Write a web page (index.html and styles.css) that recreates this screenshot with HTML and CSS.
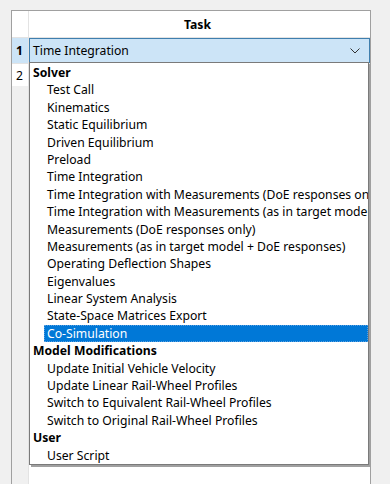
FILE: index.html
```html
<!DOCTYPE html>
<html>
<head>
<meta charset="utf-8">
<link rel="stylesheet" href="styles.css">
</head>
<body>
<div class="grid">
  <div class="row head">
    <div class="rh"></div>
    <div class="cell title">Task</div>
  </div>
  <div class="row r1">
    <div class="rh sel">1</div>
    <div class="cell edit">
      <span>Time Integration</span>
      <svg class="chev" width="10" height="6" viewBox="0 0 10 6"><path d="M0.5 0.5 L5 5 L9.5 0.5" fill="none" stroke="#333" stroke-width="1"/></svg>
    </div>
  </div>
  <div class="row r2">
    <div class="rh">2</div>
    <div class="cell"></div>
  </div>
  <div class="rest">
    <div class="rh"></div>
    <div class="cell"></div>
  </div>

  <div class="drop">
    <div class="grp">Solver</div>
    <div class="it">Test Call</div>
    <div class="it">Kinematics</div>
    <div class="it">Static Equilibrium</div>
    <div class="it">Driven Equilibrium</div>
    <div class="it">Preload</div>
    <div class="it">Time Integration</div>
    <div class="it">Time Integration with Measurements (DoE responses only)</div>
    <div class="it">Time Integration with Measurements (as in target model + DoE responses)</div>
    <div class="it">Measurements (DoE responses only)</div>
    <div class="it">Measurements (as in target model + DoE responses)</div>
    <div class="it">Operating Deflection Shapes</div>
    <div class="it">Eigenvalues</div>
    <div class="it">Linear System Analysis</div>
    <div class="it">State-Space Matrices Export</div>
    <div class="it hl">Co-Simulation</div>
    <div class="grp">Model Modifications</div>
    <div class="it">Update Initial Vehicle Velocity</div>
    <div class="it">Update Linear Rail-Wheel Profiles</div>
    <div class="it">Switch to Equivalent Rail-Wheel Profiles</div>
    <div class="it">Switch to Original Rail-Wheel Profiles</div>
    <div class="grp">User</div>
    <div class="it">User Script</div>
  </div>
</div>
</body>
</html>
```
FILE: styles.css
```css
html, body {
  margin: 0;
  padding: 0;
  background: #f0f0f0;
  height: 484px;
  overflow: hidden;
}
body {
  font-family: "Noto Sans", "Open Sans", sans-serif;
  font-size: 12.2px;
  color: #000;
}
.grid {
  position: relative;
  margin: 10px 0 0 11px;
  width: 358px;
  height: 480px;
  border: 1px solid #a0a0a0;
  border-bottom: none;
  background: #f0f0f0;
  display: flex;
  flex-direction: column;
}
.row {
  display: flex;
  background: #fff;
}
.rh {
  width: 17px;
  flex: none;
  border-right: 1px solid #e3e3e3;
  box-sizing: border-box;
  display: flex;
  align-items: center;
  padding-left: 4px;
}
.cell {
  flex: 1;
  display: flex;
  align-items: center;
  box-sizing: border-box;
}
.head {
  height: 26px;
  border-bottom: 1px solid #e3e3e3;
}
.title {
  justify-content: center;
  font-weight: bold;
  padding-right: 4px;
}
.r1 {
  height: 25px;
}
.rh.sel {
  background: #cce4f7;
  font-weight: bold;
}
.edit {
  background: #cce4f7;
  border: 1px solid #3f7fae;
  padding-left: 3px;
  justify-content: space-between;
  padding-right: 9px;
}
.r2 {
  height: 22px;
  border-top: 1px solid #e3e3e3;
}
.rest {
  flex: 1;
  display: flex;
  background: #fff;
}
.rest .rh {
  background: #f0f0f0;
}
.drop {
  position: absolute;
  left: 17px;
  top: 51px;
  width: 340px;
  height: 403px;
  box-sizing: border-box;
  background: #fff;
  border: 1px solid #7a7a7a;
  box-shadow: 2px 2px 0 #a0a0a0;
  padding-top: 1px;
  overflow: hidden;
}
.grp, .it {
  height: 17.4px;
  line-height: 17.4px;
  white-space: nowrap;
  overflow: hidden;
}
.grp {
  font-weight: bold;
  padding-left: 3px;
}
.it {
  margin-left: 14px;
  padding-left: 3px;
}
.it.hl {
  background: #0078d7;
  color: #fff;
  outline: 1px dotted #5aa0e0;
  outline-offset: -1px;
}
```
